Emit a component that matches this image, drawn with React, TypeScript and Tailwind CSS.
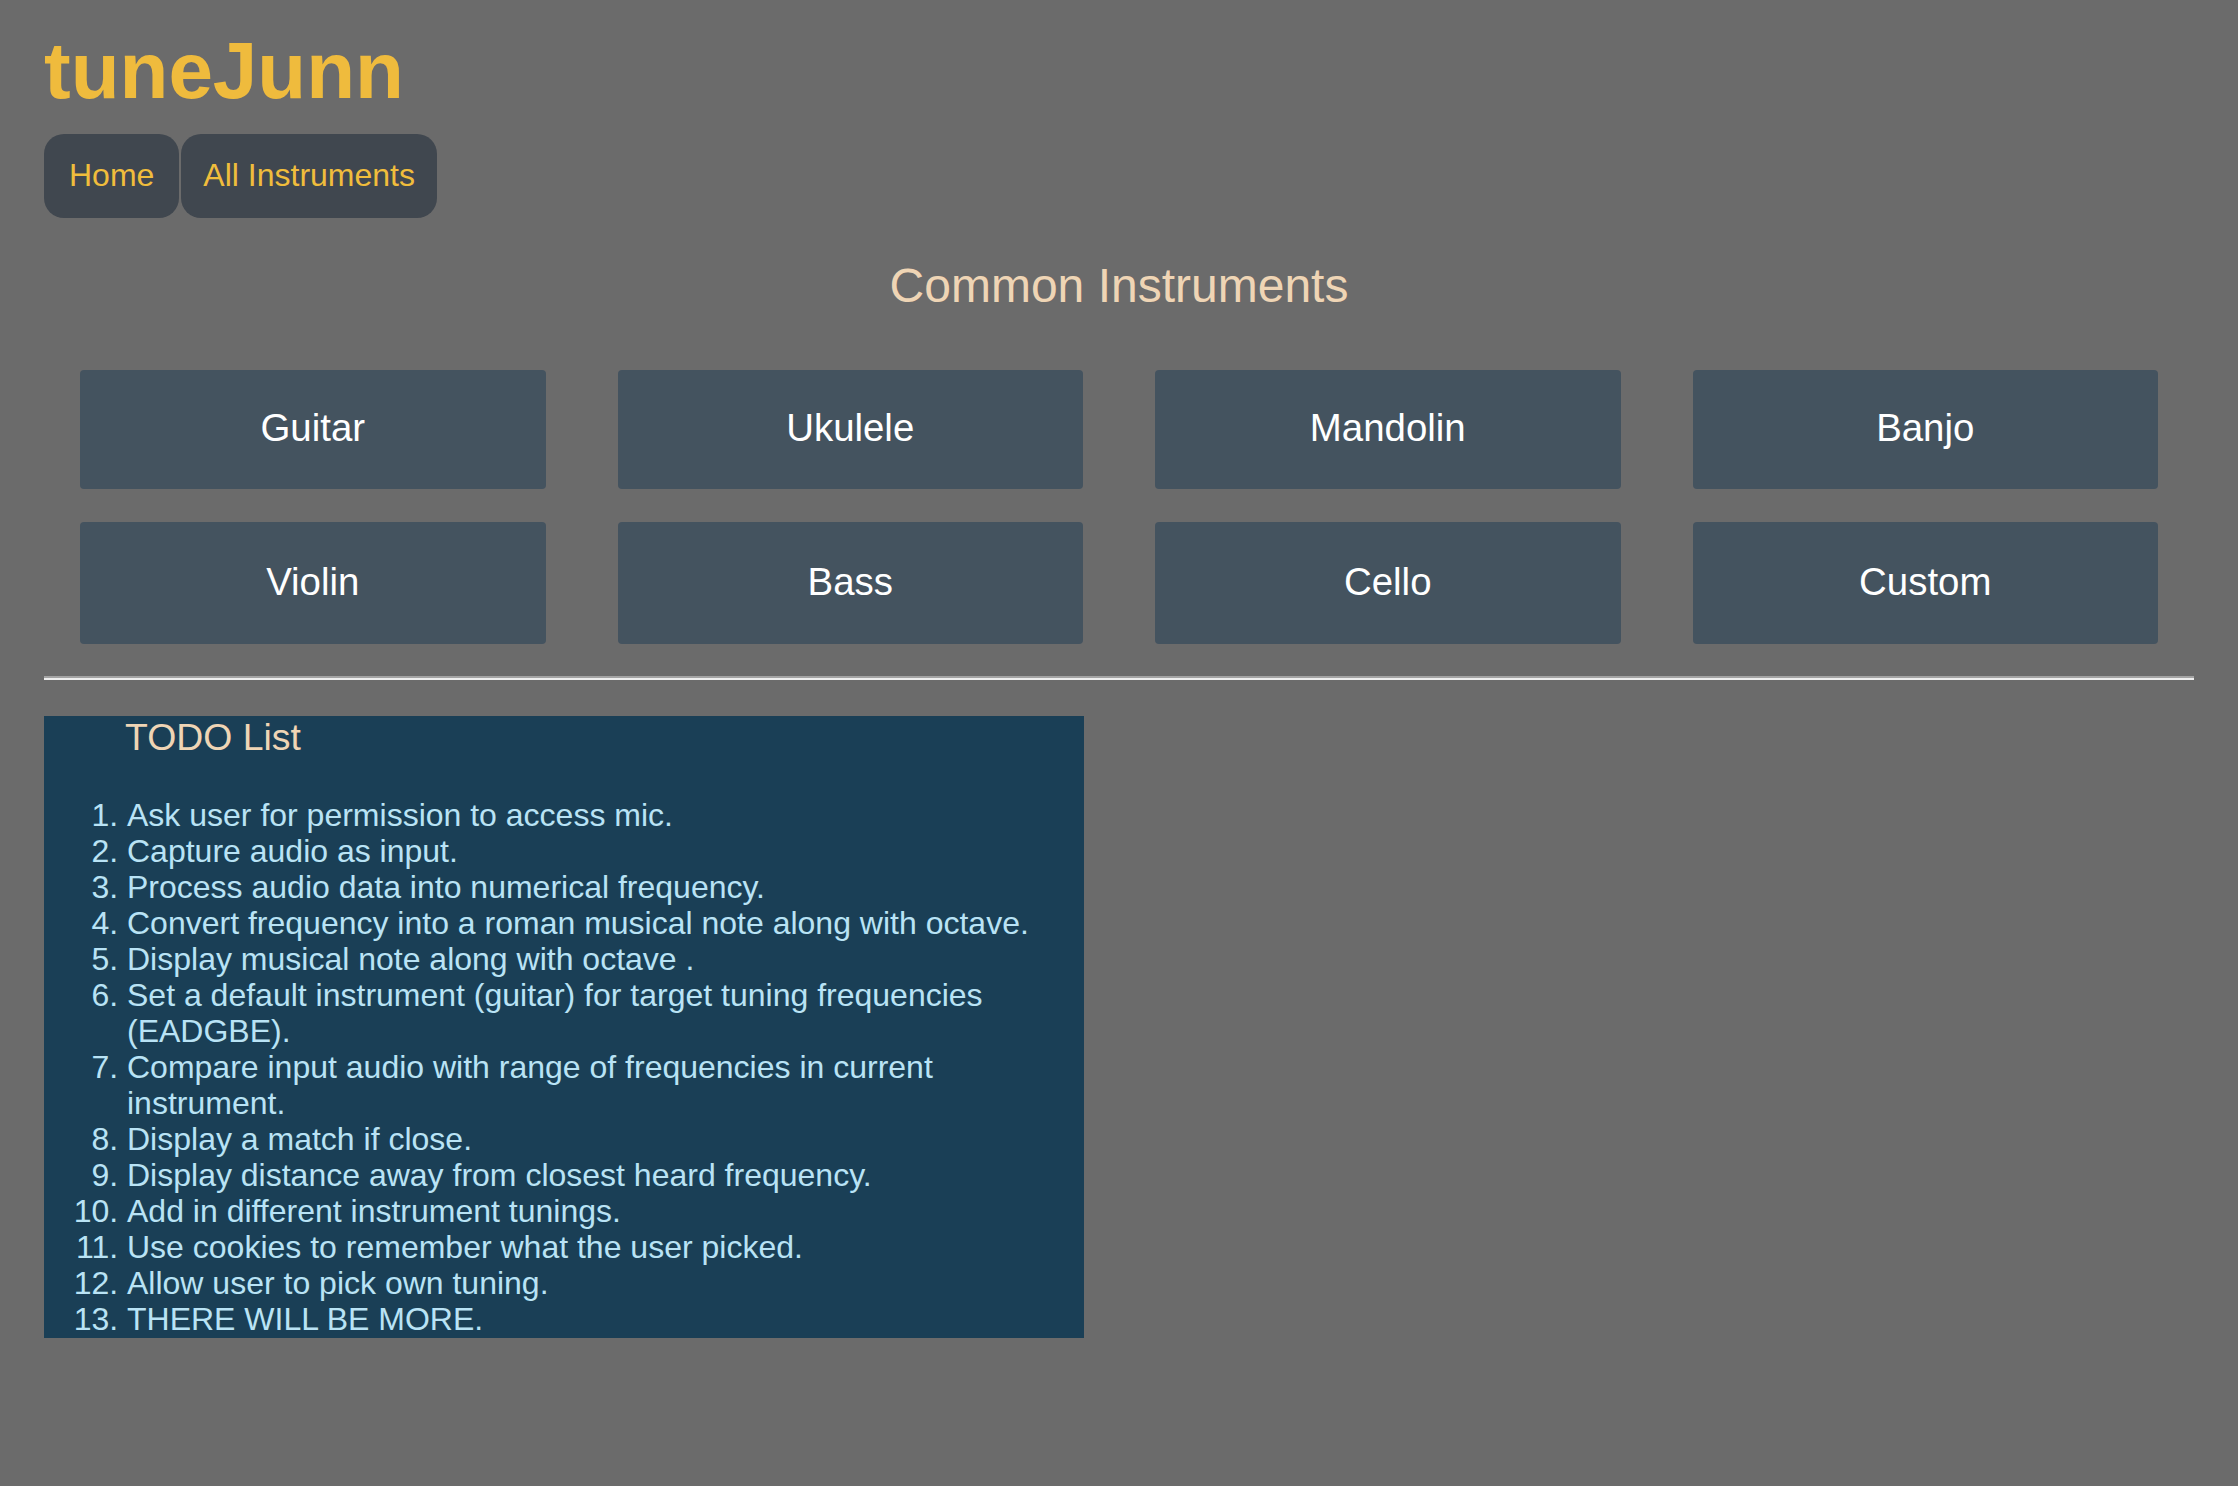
import React from "react";

const rows = [
  { h: "h-[119px]", items: ["Guitar", "Ukulele", "Mandolin", "Banjo"] },
  { h: "h-[122px]", items: ["Violin", "Bass", "Cello", "Custom"] },
];

const todos = [
  "Ask user for permission to access mic.",
  "Capture audio as input.",
  "Process audio data into numerical frequency.",
  "Convert frequency into a roman musical note along with octave.",
  "Display musical note along with octave .",
  "Set a default instrument (guitar) for target tuning frequencies (EADGBE).",
  "Compare input audio with range of frequencies in current instrument.",
  "Display a match if close.",
  "Display distance away from closest heard frequency.",
  "Add in different instrument tunings.",
  "Use cookies to remember what the user picked.",
  "Allow user to pick own tuning.",
  "THERE WILL BE MORE.",
];

export default function App() {
  return (
    <div
      className="min-h-[1486px] w-full bg-[#6b6b6b] px-[44px]"
      style={{ fontFamily: '"Liberation Sans", Arial, Helvetica, sans-serif' }}
    >
      <div className="pt-[25px] text-[80px] font-bold leading-[92px] text-[#efbb3d]">tuneJunn</div>
      <nav className="mt-[17px] flex gap-[2px]">
        <a className="flex h-[84px] items-center rounded-[20px] bg-[#40474f] px-[25px] pb-[2px] text-[32px] text-[#f0bd3c]">Home</a>
        <a className="flex h-[84px] items-center rounded-[20px] bg-[#40474f] px-[22px] pb-[2px] text-[32px] text-[#f0bd3c]">All Instruments</a>
      </nav>
      <h2 className="mt-[40px] text-center text-[48px] leading-[55px] text-[#efd5b5]">Common Instruments</h2>
      <div className="mt-[57px] flex flex-col gap-[33px] px-[36px]">
        {rows.map((r, i) => (
          <div key={i} className="grid grid-cols-4 gap-x-[72px]">
            {r.items.map((name) => (
              <button
                key={name}
                className={`${r.h} flex items-center justify-center rounded-[4px] bg-[#44535f] pb-[3px] text-[38.4px] text-white`}
              >
                {name}
              </button>
            ))}
          </div>
        ))}
      </div>
      <div className="mt-[32px] h-0 border-t-2 border-b-2 border-t-[#a3a3a3] border-b-[#eeeeee]" />
      <div className="mt-[36px] w-[1040px] bg-[#1a3f56] pb-[1px]">
        <h3 className="pl-[81px] text-[37.4px] leading-[43px] text-[#efd5b5]">TODO List</h3>
        <ol className="mt-[38px] list-decimal pl-[83px] text-[32px] leading-[36px] text-[#b9e3f5]">
          {todos.map((t) => (
            <li key={t}>{t}</li>
          ))}
        </ol>
      </div>
    </div>
  );
}
